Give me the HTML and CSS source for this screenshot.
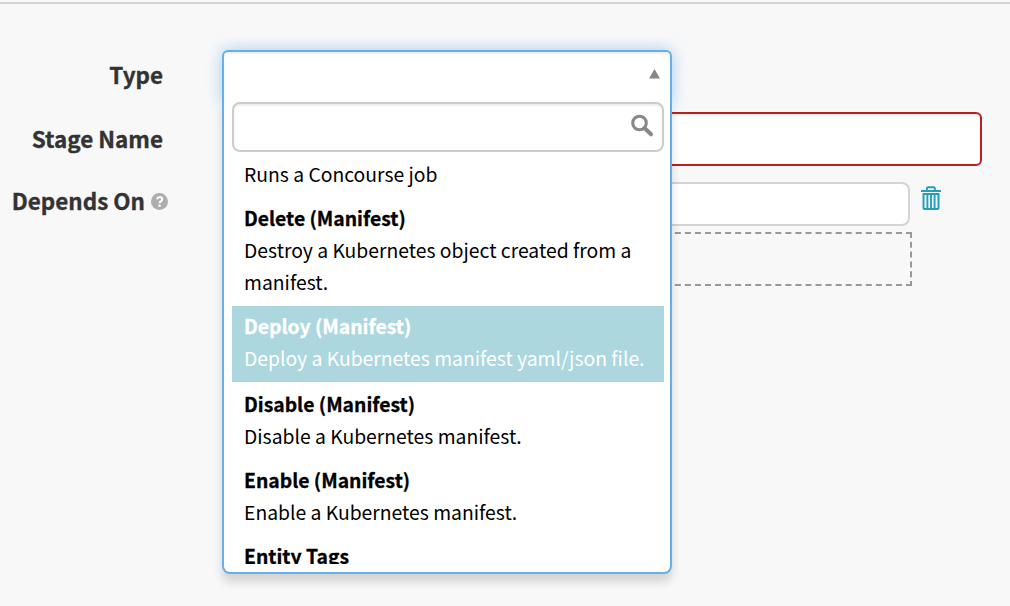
FILE: index.html
```html
<!DOCTYPE html>
<html lang="en">
<head>
<meta charset="utf-8">
<title>Stage configuration</title>
<link rel="stylesheet" href="styles.css">
</head>
<body>
<main class="panel">
  <div class="row row-type">
    <label class="label">Type</label>
    <div class="select">
      <div class="select-choice"><svg class="arrow" width="11" height="10" viewBox="0 0 11 10"><path d="M5.5 0L11 9.5H0z"/></svg></div>
      <div class="select-drop">
        <div class="search">
          <svg width="24" height="24" viewBox="0 0 24 24"><circle cx="9.5" cy="9" r="6.8" fill="none" stroke="#888" stroke-width="3.1"/><path d="M14.5 14L21 20.3" stroke="#888" stroke-width="4" stroke-linecap="round"/></svg>
        </div>
        <div class="results">
          <div class="result first"><p>Runs a Concourse job</p></div>
          <div class="result before"><strong>Delete (Manifest)</strong><p>Destroy a Kubernetes object created from a<br>manifest.</p></div>
          <div class="result active"><strong>Deploy (Manifest)</strong><p>Deploy a Kubernetes manifest yaml/json file.</p></div>
          <div class="result"><strong>Disable (Manifest)</strong><p>Disable a Kubernetes manifest.</p></div>
          <div class="result"><strong>Enable (Manifest)</strong><p>Enable a Kubernetes manifest.</p></div>
          <div class="result"><strong>Entity Tags</strong></div>
        </div>
      </div>
    </div>
  </div>
  <div class="row row-name">
    <label class="label">Stage Name</label>
    <div class="input invalid"></div>
  </div>
  <div class="row row-depends">
    <label class="label with-help">Depends On <svg class="help" width="17" height="17" viewBox="0 0 17 17"><circle cx="8.5" cy="8.5" r="8.5" fill="#adadad"/><path d="M5.8 6.2C6.5 4.6 7.5 4.2 8.7 4.2C10.1 4.2 11.2 5.1 11.2 6.4C11.2 8.3 8.5 8.2 8.5 10.2" fill="none" stroke="#f8f8f8" stroke-width="2.2"/><path d="M7.3 11.5h2.4v2.3H7.3z" fill="#f8f8f8"/></svg></label>
    <div class="depends">
      <div class="depends-line">
        <div class="input depends-input"></div>
        <svg class="trash" width="20" height="25" viewBox="0 0 20 25"><g fill="none" stroke="#249fb9"><path d="M5.9 4V2.4Q5.9 1.2 7.1 1.2H12.7Q13.9 1.2 13.9 2.4V4" stroke-width="1.9"/><path d="M0 5H20" stroke-width="2"/><path d="M2.5 8H17.5V22Q17.5 23 16.5 23H3.5Q2.5 23 2.5 22Z" stroke-width="2"/><path d="M6.4 8V23M10 8V23M13.6 8V23" stroke-width="1.9"/></g></svg>
      </div>
      <svg class="dropzone" width="690" height="54" viewBox="0 0 690 54"><path d="M689 53V1" fill="none" stroke="#999" stroke-width="2" stroke-dasharray="6 3.8" stroke-dashoffset="2"/><path d="M690 1H0M690 53H0" fill="none" stroke="#999" stroke-width="2" stroke-dasharray="6 4.05"/></svg>
    </div>
  </div>
</main>
</body>
</html>
```
FILE: styles.css
```css
* { box-sizing: border-box; }
body {
  margin: 0;
  height: 606px;
  overflow: hidden;
  background: #f8f8f8;
  font-family: "Noto Sans CJK SC", "Noto Sans", sans-serif;
  font-size: 19.33px;
  color: #000;
}
.panel {
  margin-top: 2px;
  padding-top: 46px;
  border-top: 2px solid #d4d4d4;
}
.row {
  display: grid;
  grid-template-columns: 163px 1fr;
  column-gap: 59px;
}
.row-type { height: 62px; }
.row-name { height: 70px; }
.label {
  color: #333;
  font-size: 22.45px;
  font-weight: 700;
  -webkit-text-stroke: 0.35px currentColor;
  line-height: 32px;
  text-align: right;
  white-space: nowrap;
  padding-top: 8px;
}
.row-name .label { padding-top: 10px; }
.row-depends .label { padding-top: 2px; }
.with-help {
  display: flex;
  justify-content: flex-end;
  gap: 6px;
  margin-right: -5px;
}
.help { margin-top: 9px; }
.input {
  background: #fff;
  border: 2px solid #d4d4d4;
  border-radius: 8px;
}
.invalid {
  width: 760px;
  height: 54px;
  border-color: #b82020;
  border-radius: 6px;
  box-shadow: inset 0 2px 2px rgba(0,0,0,.07);
}
.depends-line { display: flex; gap: 11px; }
.depends-input { width: 688px; height: 44px; }
.trash { margin-top: 4px; }
.dropzone { display: block; margin-top: 6px; }
.select {
  position: relative;
  z-index: 2;
  width: 450px;
}
.select-choice {
  display: flex;
  justify-content: flex-end;
  height: 54px;
  padding: 17px 10px 0 0;
  background: #fff;
  border: 2px solid #66afe9;
  border-bottom: 0;
  border-radius: 6px 6px 0 0;
  box-shadow: inset 0 2px 2px rgba(0,0,0,.07), 0 0 16px rgba(102,175,233,.6);
}
.arrow { fill: #888; }
.select-drop {
  position: absolute;
  top: 52px;
  left: 0;
  width: 450px;
  height: 472px;
  padding: 0 6px 0 8px;
  background: #fff;
  border: 2px solid #66afe9;
  border-top: 0;
  border-radius: 0 0 8px 8px;
  box-shadow: 0 8px 10px rgba(0,0,0,.15);
}
.search {
  display: flex;
  justify-content: flex-end;
  height: 50px;
  padding: 10px 8px;
  border: 2px solid #ccc;
  border-radius: 8px;
  box-shadow: inset 0 2px 2px rgba(0,0,0,.07);
}
.results {
  height: 412px;
  overflow: hidden;
}
.result {
  padding: 6px 12px;
  line-height: 32px;
  white-space: nowrap;
}
.result p { margin: 0; }
.result strong {
  display: block;
  font-weight: 700;
  -webkit-text-stroke: 0.3px currentColor;
}
.before { padding-bottom: 8px; }
.active {
  padding: 4px 12px 8px;
  background: #acd7de;
  color: #fff;
}
```
